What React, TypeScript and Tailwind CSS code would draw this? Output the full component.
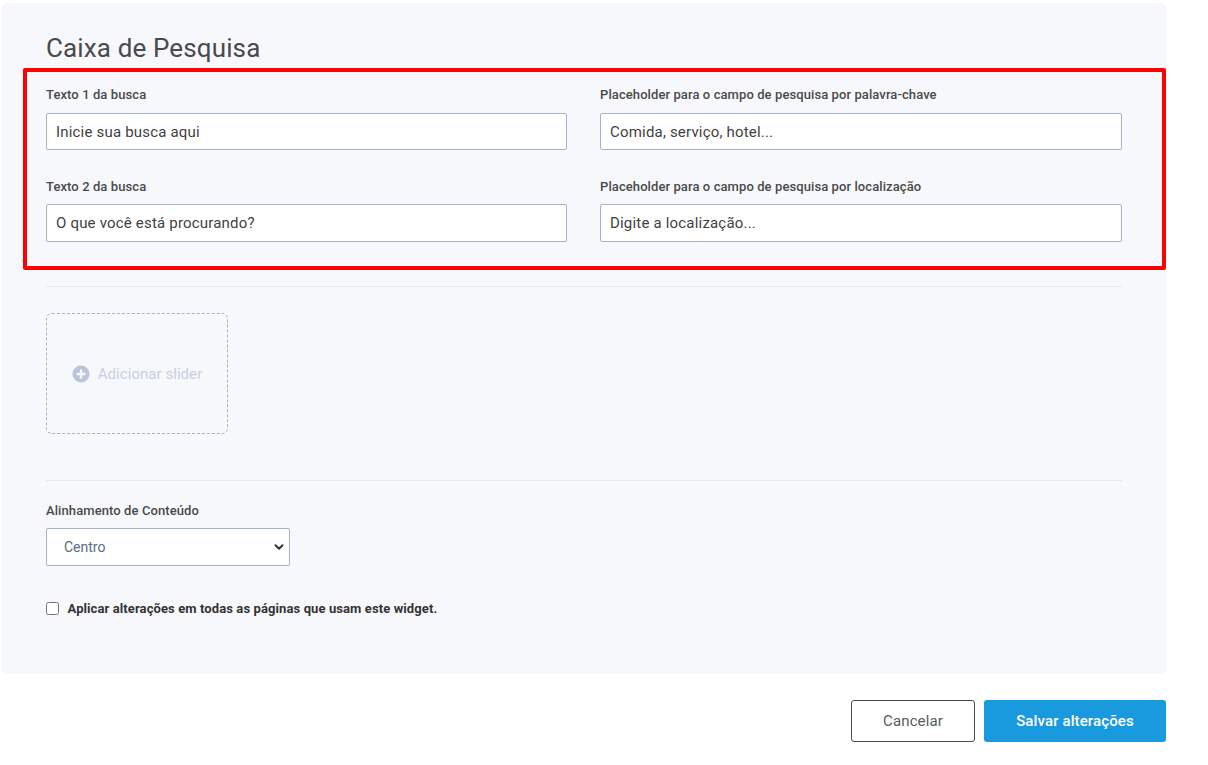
import React from "react";
import { ChevronDown } from "lucide-react";

function Field({ label, value, tall }: { label: string; value: string; tall?: boolean }) {
  return (
    <div className="flex flex-col">
      <label className="text-[13px] leading-[18px] font-medium tracking-[0.09px] text-[#4a4a4a]">{label}</label>
      <input
        readOnly
        value={value}
        className={
          (tall ? "mt-[8px] h-[38px] " : "mt-[9px] h-[37px] ") +
          "w-full rounded-[2px] border border-[#a3b3cc] bg-white pl-[9px] pr-[9px] text-[15px] tracking-[0.19px] text-[#3f3f3f] outline-none"
        }
      />
    </div>
  );
}

export default function App() {
  return (
    <div className="relative h-[765px] w-[1208px] overflow-hidden bg-white font-['Roboto',sans-serif]">
      <div className="ml-[2px] mt-[3px] h-[671px] w-[1164px] rounded-[4px] bg-[#f7f8fc] pl-[44px] pr-[44px]">
        <h1 className="pt-[28px] text-[26px] leading-[34px] font-normal tracking-[0.13px] text-[#4a4a4a]">Caixa de Pesquisa</h1>
        <div className="mt-[21px] grid grid-cols-[521px_522px] gap-x-[33px] gap-y-[28px]">
          <Field label="Texto 1 da busca" value="Inicie sua busca aqui" />
          <Field label="Placeholder para o campo de pesquisa por palavra-chave" value="Comida, serviço, hotel..." />
          <Field label="Texto 2 da busca" value="O que você está procurando?" tall />
          <Field label="Placeholder para o campo de pesquisa por localização" value="Digite a localização..." tall />
        </div>
        <hr className="mt-[44px] border-t border-[#e6e8ee]" />
        <div className="mt-[26px] flex h-[121px] w-[182px] items-center justify-center gap-[8px] rounded-[6px] border border-dashed border-[#a3b3cc]">
          <svg width="18" height="18" viewBox="0 0 18 18" className="shrink-0">
            <circle cx="9" cy="9" r="8.5" fill="#b9c5d9" />
            <path d="M9 4.6v8.8M4.6 9h8.8" stroke="#f7f8fc" strokeWidth="2.4" />
          </svg>
          <span className="pt-[1px] text-[15px] tracking-[0.05px] text-[#c5d0e3]">Adicionar slider</span>
        </div>
        <hr className="mt-[46px] border-t border-[#e6e8ee]" />
        <label className="mt-[21px] block text-[13px] leading-[18px] font-medium tracking-[0.09px] text-[#4a4a4a]">Alinhamento de Conteúdo</label>
        <div className="mt-[8px] flex h-[38px] w-[244px] items-center justify-between rounded-[2px] border border-[#a3b3cc] bg-white pl-[17px] pr-[3px] text-[14px] text-[#5b6b80]">
          <span>Centro</span>
          <ChevronDown size={14} strokeWidth={3.5} className="text-[#333]" />
        </div>
        <div className="mt-[34px] flex items-center gap-[9px]">
          <span className="h-[13px] w-[13px] -translate-y-px rounded-[2.5px] border border-[#767676] bg-white" />
          <span className="-ml-[0.5px] text-[13px] leading-[18px] font-bold tracking-[0.1px] text-[#333]">Aplicar alterações em todas as páginas que usam este widget.</span>
        </div>
      </div>
      <div className="mt-[26px] flex w-[1166px] justify-end gap-[9px]">
        <button className="h-[42px] w-[124px] rounded-[3px] border border-[#4a4a4a] bg-white text-[15px] tracking-[0.12px] text-[#5a5a5a]">Cancelar</button>
        <button className="h-[42px] w-[182px] rounded-[3px] bg-[#1a9ade] text-[15px] font-medium tracking-[0.12px] text-white">Salvar alterações</button>
      </div>
      <div className="absolute left-[23px] top-[68px] h-[202px] w-[1143px] rounded-[2px] border-4 border-[#ff0000]" />
    </div>
  );
}
